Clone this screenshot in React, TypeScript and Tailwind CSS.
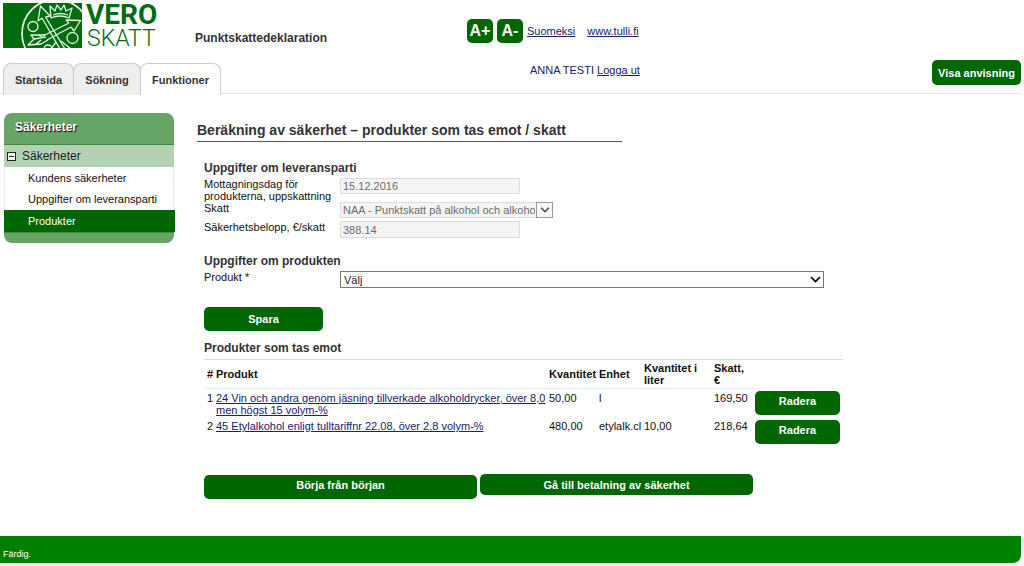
import React from 'react';

interface ProductRow {
    id: number;
    name: string;
    quantity: string;
    unit: string;
    litres: string;
    tax: string;
}

const tabs = [
    { label: 'Startsida', active: false, width: 'w-[69px]' },
    { label: 'Sökning', active: false, width: 'w-[66px]' },
    { label: 'Funktioner', active: true, width: 'w-[79px]' },
];

const rows: ProductRow[] = [
    { id: 1, name: '24 Vin och andra genom jäsning tillverkade alkoholdrycker, över 8,0 men högst 15 volym-%', quantity: '50,00', unit: 'l', litres: '', tax: '169,50' },
    { id: 2, name: '45 Etylalkohol enligt tulltariffnr 22.08, över 2,8 volym-%', quantity: '480,00', unit: 'etylalk.cl', litres: '10,00', tax: '218,64' },
];

const buttonClass = 'rounded-[5px] bg-[#006600] font-bold text-white';
const linkClass = 'text-[#20206c] underline';

const Logo = () => (
    <div className="flex gap-[5px] text-[#006c10]">
        <svg width="79" height="45" viewBox="0 0 79 45" aria-hidden="true">
            <rect width="79" height="45" fill="#006c10" />
            <g fill="none" stroke="#e4f1e2" strokeWidth="1.3" strokeLinejoin="round">
                <circle cx="53" cy="30.5" r="34" strokeWidth="1.8" />
                <circle cx="30" cy="23.5" r="5" />
                <circle cx="69.5" cy="35" r="5.5" />
                <circle cx="45" cy="46" r="4" />
                {/* Crown */}
                <path d="M48 15 L47 3 L52 8 L54 2 L58 7 L61 2 L63 8 L69 5 L66 15 Q57 11 48 15 Z M50 12 Q57 9 65 12" />
                {/* Arrow pointing up left */}
                <path d="M39 15 L57 46 M42.5 14 L62 46 M39 15 L35 18 L37.5 3 L47 13 L42.5 14" />
                {/* Arrow pointing up right, with its feathers */}
                <path d="M66 20 L40 33 M68 24 L44 37 M66 20 L63 17 L77.5 17.5 L71 28 L68 24" />
                <path d="M42 32 L28 32 L31 36 L25 42 L38 41 L45 37 M31 36 L43 34 M35 32 L39 34 M33 41 L38 37" />
                <path d="M53 39 L48 46 M58 38 L68 46" />
            </g>
        </svg>
        <div className="font-['Roboto',sans-serif]">
            <div className="-ml-px font-['Liberation_Sans_Narrow','Roboto',sans-serif] text-[28px] leading-[24px] font-bold">VERO</div>
            <div className="text-[23px] leading-[24px] font-light">SKATT</div>
        </div>
    </div>
);

const Header = () => (
    <header className="mr-[3px]">
        <div className="flex h-[60px] items-start pl-[3px] pt-[3px]">
            <div className="w-[192px]">
                <Logo />
            </div>
            <div className="w-[272px] pt-7 text-[12px] leading-[14px] font-bold text-[#333]">Punktskattedeklaration</div>
            <div className="flex items-center gap-1 pt-4">
                <button type="button" className="h-6 w-[26px] rounded-[5px] bg-[#006600] text-[16px] leading-[20px] font-bold text-white">A+</button>
                <button type="button" className="h-6 w-[26px] rounded-[5px] bg-[#006600] text-[16px] leading-[20px] font-bold text-white">A-</button>
                <a href="#fi" className={linkClass}>Suomeksi</a>
                <a href="#tulli" className={`ml-2 ${linkClass}`}>www.tulli.fi</a>
            </div>
        </div>
        <div className="flex h-[34px] items-start border-b border-[#e4e4e4]">
            <nav className="flex w-[530px] pl-[3px] pt-[3px]">
                {tabs.map((tab) => (
                    <a
                        key={tab.label}
                        href="#tab"
                        className={`box-content flex h-[31px] items-center justify-center rounded-t-[8px] border border-b-0 border-[#ccc] -mr-px text-[11px] font-bold text-[#333] ${tab.width} ${tab.active ? 'bg-white' : 'bg-[#eeeeee]'}`}
                    >
                        {tab.label}
                    </a>
                ))}
            </nav>
            <div className="pt-1 text-[#20206c]">
                ANNA TESTI <a href="#logout" className="underline">Logga ut</a>
            </div>
            <button type="button" className={`ml-auto h-[25px] w-[89px] ${buttonClass}`}>Visa anvisning</button>
        </div>
    </header>
);

const Sidebar = () => (
    <aside className="w-[170px] shrink-0">
        <h2 className="h-8 rounded-t-[8px] border-b border-[#3f8a3f] bg-[#67a567] pl-[11px] pt-[7px] text-[12px] leading-[14px] font-bold text-white [text-shadow:1px_1px_1px_#000]">Säkerheter</h2>
        <div className="flex h-[22px] items-center gap-[6px] bg-[#b3d2b3] pl-[3px] text-[12px] text-[#222]">
            <svg width="9" height="9" viewBox="0 0 9 9" aria-hidden="true">
                <rect x="0.5" y="0.5" width="8" height="8" fill="#fff" stroke="#222" />
                <path d="M2 4.5 H7" stroke="#222" />
            </svg>
            Säkerheter
        </div>
        <ul className="border-x border-[#e4f0f0]">
            <li className="flex h-[21px] items-center pl-[23px]"><a href="#kund">Kundens säkerheter</a></li>
            <li className="flex h-[22px] items-center pl-[23px]"><a href="#parti">Uppgifter om leveransparti</a></li>
        </ul>
        <a href="#produkter" className="-mr-px block h-[22px] bg-[#006600] pl-6 leading-[22px] text-white">Produkter</a>
        <div className="h-[11px] rounded-b-[8px] border-t border-[#3f8a3f] bg-[#67a567]" />
    </aside>
);

const Chevron = ({ className }: { className: string }) => (
    <svg className={className} width="11" height="7" viewBox="0 0 11 7" fill="none" aria-hidden="true">
        <path d="M1 1 L5.5 5.5 L10 1" stroke="currentColor" strokeWidth="1.7" />
    </svg>
);

const fieldClass = 'border border-[#ddd] bg-[#f4f4f4] text-[#6d6d6d] px-[2px]';

const ConsignmentForm = () => (
    <section>
        <h2 className="text-[12px] leading-[14px] font-bold text-[#333]">Uppgifter om leveransparti</h2>
        <div className="mt-[3px] grid grid-cols-[136px_1fr]">
            <label htmlFor="day" className="h-6">Mottagningsdag för produkterna, uppskattning</label>
            <input id="day" disabled defaultValue="15.12.2016" className={`h-4 w-[180px] ${fieldClass}`} />
            <label htmlFor="tax" className="h-[19px]">Skatt</label>
            <div className="relative h-4 w-[213px]">
                <select id="tax" disabled className={`h-4 w-full appearance-none pr-[17px] opacity-100 ${fieldClass}`}>
                    <option>NAA - Punktskatt på alkohol och alkoholdrycker</option>
                </select>
                <span className="pointer-events-none absolute right-0 top-0 flex h-4 w-[17px] items-center justify-center border border-[#999] bg-[#f7f7f7] text-[#444]">
                    <Chevron className="h-[6px] w-[10px]" />
                </span>
            </div>
            <label htmlFor="amount">Säkerhetsbelopp, €/skatt</label>
            <input id="amount" disabled defaultValue="388.14" className={`h-[17px] w-[180px] ${fieldClass}`} />
        </div>
    </section>
);

const ProductForm = () => (
    <section className="mt-4">
        <h2 className="text-[12px] leading-[14px] font-bold text-[#333]">Uppgifter om produkten</h2>
        <div className="mt-[3px] grid grid-cols-[136px_1fr]">
            <label htmlFor="product">Produkt *</label>
            <div className="relative max-w-[484px]">
                <select id="product" className="block h-[17px] w-full appearance-none border border-[#777] bg-white px-[3px] text-[#222]">
                    <option>Välj</option>
                </select>
                <Chevron className="pointer-events-none absolute right-[3px] top-[5px] text-black" />
            </div>
        </div>
        <button type="submit" className={`mt-[19px] h-6 w-[119px] ${buttonClass}`}>Spara</button>
    </section>
);

const ProductTable = () => (
    <section className="mt-[10px]">
        <h2 className="text-[12px] leading-[14px] font-bold text-[#333]">Produkter som tas emot</h2>
        <div className="mt-[4px] max-w-[639px] border-t border-[#cfe0ea]">
            <table className="w-full table-fixed text-left">
                <colgroup>
                    <col className="w-3" />
                    <col />
                    <col className="w-[50px]" />
                    <col className="w-[45px]" />
                    <col className="w-[70px]" />
                    <col className="w-[41px]" />
                    <col className="w-[88px]" />
                </colgroup>
                <thead>
                    <tr className="h-[28px] *:border-b *:border-[#e6eef4] *:p-0">
                        <th className="pl-[3px]!">#</th>
                        <th>Produkt</th>
                        <th>Kvantitet</th>
                        <th>Enhet</th>
                        <th className="pr-4!">Kvantitet i liter</th>
                        <th className="pr-1!">Skatt, €</th>
                        <td className="border-b-0!" />
                    </tr>
                </thead>
                <tbody>
                    {rows.map((row) => (
                        <tr key={row.id} className="h-[29px] align-top *:pt-[3px]">
                            <td className="pl-[3px]">{row.id}</td>
                            <td><a href="#produkt" className={linkClass}>{row.name}</a></td>
                            <td>{row.quantity}</td>
                            <td className="whitespace-nowrap">{row.unit}</td>
                            <td>{row.litres}</td>
                            <td>{row.tax}</td>
                            <td><button type="button" className={`block h-6 w-[85px] pb-[4px] ${buttonClass}`}>Radera</button></td>
                        </tr>
                    ))}
                </tbody>
            </table>
        </div>
    </section>
);

export default function App() {
    return (
        <div className="min-h-screen bg-white font-['Liberation_Sans',Arial,sans-serif] text-[11px] leading-[12px] text-[#111]">
            <Header />
            <div className="flex pl-1 pt-[19px]">
                <Sidebar />
                <main className="min-w-0 flex-1 pl-[23px] pt-[9px]">
                    <h1 className="max-w-[425px] border-b border-[#2d7a2d] pb-[2px] text-[14px] leading-[17px] font-bold whitespace-nowrap text-[#333]">
                        Beräkning av säkerhet – produkter som tas emot / skatt
                    </h1>
                    <div className="pl-[7px] pt-[19px]">
                        <ConsignmentForm />
                        <ProductForm />
                        <ProductTable />
                        <div className="mt-7 flex items-start gap-[3px]">
                            <button type="button" className={`mt-px h-6 w-[273px] pb-[4px] ${buttonClass}`}>Börja från början</button>
                            <button type="button" className={`h-[21px] w-[273px] ${buttonClass}`}>Gå till betalning av säkerhet</button>
                        </div>
                    </div>
                </main>
            </div>
            <footer className="mt-[37px] mr-[3px] h-[27px] rounded-br-[8px] bg-[#008000] pl-[3px] pt-3 text-[9px] text-white">Färdig.</footer>
        </div>
    );
}
